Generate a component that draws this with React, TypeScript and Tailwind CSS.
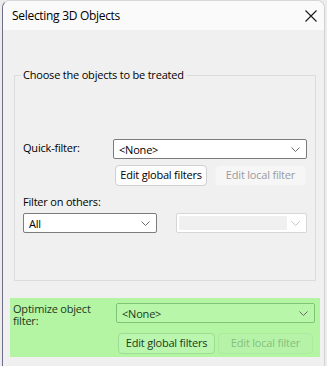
import React from 'react';

const font = { fontFamily: '"Open Sans", "Noto Sans", sans-serif' };

const Chevron = ({ disabled = false }: { disabled?: boolean }) => (
  <svg width="9" height="5" viewBox="0 0 9 5" className="shrink-0">
    <path
      d="M0.5 0.5 L4.5 4.5 L8.5 0.5"
      fill="none"
      stroke={disabled ? '#c4c4c4' : '#6a6a6a'}
      strokeWidth="1"
    />
  </svg>
);

const Combo = ({
  value,
  className = '',
  green = false,
}: {
  value: string;
  className?: string;
  green?: boolean;
}) => (
  <div
    className={`flex h-[20px] items-center justify-between rounded-[2px] border pl-[5px] pr-[6px] ${
      green ? 'border-[#7fc476] bg-[#b8f7aa] text-[#1c3a1c]' : 'border-[#7c7c7c] bg-white text-black'
    } ${className}`}
  >
    <span className="leading-none">{value}</span>
    <Chevron />
  </div>
);

const Button = ({
  label,
  disabled = false,
  green = false,
  className = '',
}: {
  label: string;
  disabled?: boolean;
  green?: boolean;
  className?: string;
}) => {
  let tone = 'border-[#d0d0d0] bg-[#fdfdfd] text-black';
  if (disabled) tone = 'border-[#f2f2f2] bg-[#f6f6f6] text-[#9a9a9e]';
  if (green && !disabled) tone = 'border-[#9fdc93] bg-[#bbf6ae] text-[#1c3a1c]';
  if (green && disabled) tone = 'border-[#abeb9d] bg-[#b6f3a8] text-[#86bf7d]';
  return (
    <div
      className={`flex h-[21px] items-center justify-center whitespace-nowrap rounded-[4px] border ${tone} ${className}`}
    >
      {label}
    </div>
  );
};

export default function App() {
  return (
    <div
      className="h-[366px] w-[327px] overflow-hidden bg-[#ececec] text-[11px] tracking-[-0.2px]"
      style={font}
    >
      <div className="ml-[2px] h-full w-[323px] overflow-hidden rounded-t-[8px] border-x border-t border-l-[#6e6e86] border-r-[#d2d2d2] border-t-[#d6d6d6] bg-[#f0f0f0]">
        {/* Title bar */}
        <div className="flex h-[29px] items-center justify-between bg-[#fafafa] pl-[9px] pr-[7px]">
          <span className="text-[12px] tracking-[-0.3px] text-black">Selecting 3D Objects</span>
          <svg width="12" height="12" viewBox="0 0 12 12">
            <path d="M0.5 0.5 L11.5 11.5 M11.5 0.5 L0.5 11.5" stroke="#1a1a1a" strokeWidth="1.1" />
          </svg>
        </div>

        {/* Group box */}
        <fieldset className="mx-[11px] mt-[37px] h-[214px] w-[302px] border border-[#dcdcdc] px-[8px]">
          <legend className="-ml-[2px] px-[2px] leading-[16px] text-black">
            Choose the objects to be treated
          </legend>

          <div className="mt-[56px] flex items-start">
            <span className="w-[90px] pt-[1px] leading-[16px]">Quick-filter:</span>
            <Combo value="<None>" className="flex-1" />
          </div>
          <div className="ml-[92px] mt-[6px] flex gap-[8px]">
            <Button label="Edit global filters" className="w-[92px]" />
            <Button label="Edit local filter" disabled className="w-[91px]" />
          </div>

          <div className="mt-[8px] leading-[16px]">Filter on others:</div>
          <div className="mt-[3px] flex gap-[19px]">
            <Combo value="All" className="w-[134px]" />
            <div className="flex h-[20px] flex-1 items-center justify-between rounded-[2px] border border-[#d6d6d6] bg-white pl-[2px] pr-[6px]">
              <div className="h-[14px] w-[108px] bg-[#f0f0f0]" />
              <Chevron disabled />
            </div>
          </div>
        </fieldset>

        {/* Optimize filter area */}
        <div className="ml-[7px] mt-[17px] w-[310px] bg-[#b4f5a4] pb-[3px] pl-[3px] pr-[5px] pt-[5px]">
          <div className="flex items-start">
            <div className="w-[103px] text-[#1c3a1c]">
              <div className="leading-[12px]">Optimize object</div>
              <div className="leading-[12px]">filter:</div>
            </div>
            <Combo value="<None>" green className="flex-1" />
          </div>
          <div className="ml-[105px] mt-[6px] flex gap-[3px]">
            <Button label="Edit global filters" green className="w-[97px]" />
            <Button label="Edit local filter" green disabled className="w-[95px]" />
          </div>
        </div>
      </div>
    </div>
  );
}
